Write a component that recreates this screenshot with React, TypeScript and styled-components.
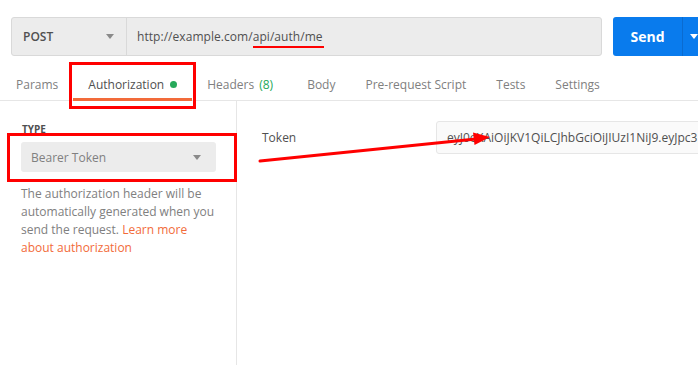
import React from "react";
import styled, { createGlobalStyle } from "styled-components";

const Global = createGlobalStyle`
  html, body { margin: 0; padding: 0; background: #ffffff; }
  body { font-family: "Open Sans", "Noto Sans", sans-serif; }
  * { box-sizing: border-box; }
`;

const Page = styled.div`
  position: relative;
  width: 698px;
  height: 365px;
  overflow: hidden;
  background: #fff;
`;

const TopBar = styled.div`
  display: flex;
  align-items: stretch;
  height: 56px;
  padding: 17px 0 0 11px;
`;

const RequestBox = styled.div`
  display: flex;
  width: 591px;
  height: 39px;
  flex-shrink: 0;
  background: #ececec;
  border: 1px solid #d9d9d9;
  border-radius: 3px;
`;

const Method = styled.div`
  display: flex;
  align-items: center;
  justify-content: space-between;
  width: 115px;
  padding: 0 12px 0 11px;
  border-right: 1px solid #d9d9d9;
  font-size: 12px;
  font-weight: 600;
  color: #505050;
`;

const Caret = styled.span<{ $color?: string; $size?: number }>`
  width: 0;
  height: 0;
  border-left: ${(p) => p.$size ?? 4}px solid transparent;
  border-right: ${(p) => p.$size ?? 4}px solid transparent;
  border-top: ${(p) => (p.$size ?? 4) + 1}px solid ${(p) => p.$color ?? "#8a8a8a"};
`;

const Url = styled.div`
  display: flex;
  align-items: center;
  padding-left: 10px;
  font-size: 12px;
  color: #505050;
  letter-spacing: 0.05px;
`;

const Marked = styled.span`
  position: relative;
  &::after {
    content: "";
    position: absolute;
    left: 0;
    right: -1px;
    bottom: -3px;
    height: 2px;
    background: #ff0000;
  }
`;

const SendButton = styled.div`
  display: flex;
  flex-shrink: 0;
  margin-left: 11px;
  width: 110px;
  height: 39px;
  background: #097bed;
  border-radius: 3px;
  color: #fff;
`;

const SendLabel = styled.div`
  display: flex;
  align-items: center;
  justify-content: center;
  width: 70px;
  font-size: 14px;
  font-weight: 700;
  border-right: 1px solid #0a6bd0;
`;

const SendDrop = styled.div`
  display: flex;
  align-items: center;
  padding-left: 7px;
`;

const TabBar = styled.div`
  position: relative;
  display: flex;
  height: 45px;
  padding-left: 1px;
  border-bottom: 1px solid #e6e6e6;
`;

const Tab = styled.div<{ $active?: boolean }>`
  position: relative;
  display: flex;
  align-items: center;
  padding: 12px 15px 0 15px;
  font-size: 12px;
  color: ${(p) => (p.$active ? "#505050" : "#808080")};
  white-space: nowrap;
  ${(p) =>
    p.$active &&
    `&::after {
      content: "";
      position: absolute;
      left: 0;
      right: 0;
      bottom: -1px;
      height: 3px;
      background: #f26b3a;
    }`}
`;

const Dot = styled.span`
  display: inline-block;
  width: 7px;
  height: 7px;
  margin-left: 6px;
  border-radius: 50%;
  background: #26a95a;
`;

const Count = styled.span`
  margin-left: 5px;
  margin-right: 4px;
  color: #26a95a;
`;

const Body = styled.div`
  display: flex;
  height: 264px;
`;

const Side = styled.div`
  width: 237px;
  flex-shrink: 0;
  padding: 21px 20px 0 21px;
  border-right: 1px solid #e6e6e6;
`;

const Label = styled.div`
  font-size: 10px;
  font-weight: 700;
  color: #505050;
  padding-left: 1px;
  line-height: 14px;
`;

const Select = styled.div`
  display: flex;
  align-items: center;
  justify-content: space-between;
  margin-top: 6px;
  height: 30px;
  width: 195px;
  padding: 0 15px 0 10px;
  background: #ececec;
  border-radius: 3px;
  font-size: 12px;
  color: #808080;
`;

const Help = styled.p`
  margin: 13px 0 0 0;
  width: 196px;
  font-size: 12px;
  line-height: 18px;
  color: #808080;
`;

const Link = styled.span`
  color: #f26b3a;
`;

const Main = styled.div`
  flex: 1;
  padding: 20px 0 0 25px;
  min-width: 0;
`;

const Row = styled.div`
  display: flex;
  align-items: center;
`;

const FieldLabel = styled.div`
  width: 174px;
  flex-shrink: 0;
  font-size: 12px;
  color: #505050;
`;

const TokenInput = styled.div`
  flex-shrink: 0;
  width: 300px;
  height: 33px;
  display: flex;
  align-items: center;
  padding-left: 10px;
  background: #fafafa;
  border: 1px solid #e6e6e6;
  border-radius: 3px;
  font-size: 12px;
  color: #505050;
  white-space: nowrap;
  overflow: hidden;
`;

const Frame = styled.div`
  position: absolute;
  border: 3px solid #ff0000;
  pointer-events: none;
`;

const Arrow = styled.svg`
  position: absolute;
  left: 0;
  top: 0;
  pointer-events: none;
`;

export default function App() {
  return (
    <>
      <Global />
      <Page>
        <TopBar>
          <RequestBox>
            <Method>
              POST
              <Caret />
            </Method>
            <Url>
              http://example.com/<Marked>api/auth/me</Marked>
            </Url>
          </RequestBox>
          <SendButton>
            <SendLabel>Send</SendLabel>
            <SendDrop>
              <Caret $color="#ffffff" />
            </SendDrop>
          </SendButton>
        </TopBar>
        <TabBar>
          <Tab>Params</Tab>
          <Tab $active>
            Authorization
            <Dot />
          </Tab>
          <Tab>
            Headers<Count>(8)</Count>
          </Tab>
          <Tab>Body</Tab>
          <Tab>Pre-request Script</Tab>
          <Tab>Tests</Tab>
          <Tab>Settings</Tab>
        </TabBar>
        <Body>
          <Side>
            <Label>TYPE</Label>
            <Select>
              Bearer Token
              <Caret />
            </Select>
            <Help>
              The authorization header will be automatically generated when you
              send the request. <Link>Learn more about authorization</Link>
            </Help>
          </Side>
          <Main>
            <Row>
              <FieldLabel>Token</FieldLabel>
              <TokenInput>
                eyJ0eXAiOiJKV1QiLCJhbGciOiJIUzI1NiJ9.eyJpc3MiOiJodHRwOi8vZXhhbXBsZS5jb20i
              </TokenInput>
            </Row>
          </Main>
        </Body>

        <Frame style={{ left: 69, top: 62, width: 127, height: 47 }} />
        <Frame style={{ left: 7, top: 133, width: 230, height: 49 }} />
        <Arrow width="698" height="365" viewBox="0 0 698 365">
          <line x1="260" y1="161" x2="476" y2="139" stroke="#ff0000" strokeWidth="3" strokeLinecap="round" />
          <polygon points="490,137 473,132.5 474.5,145" fill="#ff0000" />
        </Arrow>
      </Page>
    </>
  );
}
